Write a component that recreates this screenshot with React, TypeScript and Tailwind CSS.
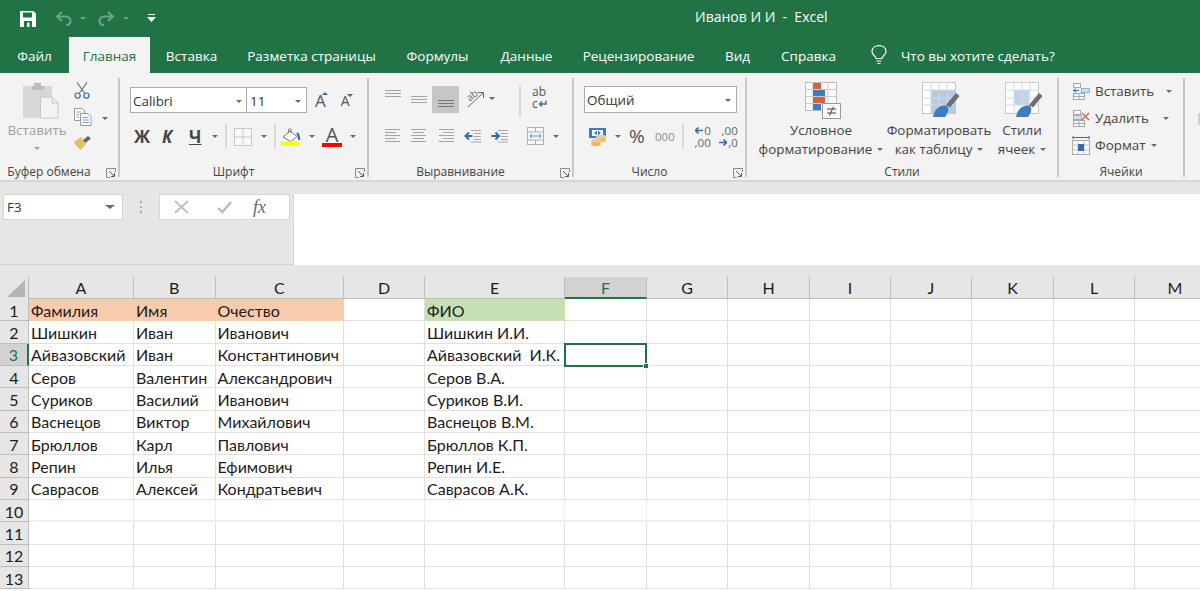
import React from "react";

const ui = "font-['Open_Sans','Noto_Sans',sans-serif]";

function Caret({ className = "" }: { className?: string }) {
  return <span className={`inline-block w-0 h-0 border-x-[3.5px] border-x-transparent border-t-[3.5px] border-t-[#6a6a6a] ${className}`}></span>;
}

function Launcher() {
  return (
    <svg width="10" height="10" viewBox="0 0 10 10" className="absolute right-[2px] top-[4px]" fill="none" stroke="#8a8a8a" strokeWidth="1">
      <path d="M9.5 4V0.5H0.5V9.5H4" />
      <path d="M3 3L8.5 8.5M5 8.5H8.5V5" stroke="#5b5b5b" />
    </svg>
  );
}

function Group({ w, label, launcher, children }: { w: string; label: string; launcher?: boolean; children: React.ReactNode }) {
  return (
    <div className={`${w} shrink-0 h-[99px] mt-[5px] flex flex-col border-r-[2px] border-[#c9c9c9]`}>
      <div className="h-[86px] flex flex-col">{children}</div>
      <div className={`relative h-[13px] flex items-start justify-center text-[12px] leading-[16px] text-[#444] ${launcher ? "pr-[20px]" : ""}`}>
        {label}
        {launcher && <Launcher />}
      </div>
    </div>
  );
}

function Lines({ rows, active }: { rows: [number, number][]; active?: boolean }) {
  return (
    <svg width="18" height={rows.length * 3 + 1} fill="none" stroke={active ? "#777" : "#a3a3a3"} strokeWidth="1">
      {rows.map(([a, b], i) => <path key={i} d={`M${a} ${i * 3 + 1.5}H${b}`} />)}
    </svg>
  );
}

const full: [number, number][] = [[1, 17], [1, 17], [1, 17]];
const leftRows: [number, number][] = [[1, 16], [1, 12], [1, 16], [1, 12], [1, 16]];
const centerRows: [number, number][] = [[1, 16], [3, 14], [1, 16], [3, 14], [1, 16]];
const rightRows: [number, number][] = [[2, 17], [6, 17], [2, 17], [6, 17], [2, 17]];

function IndentIcon({ flip }: { flip?: boolean }) {
  return (
    <svg width="18" height="14" viewBox="0 0 18 14" fill="none">
      <path d="M7 1.5H17M10 4.5H17M10 7.5H17M10 10.5H17M7 13H17" stroke="#a8a8a8" />
      {flip
        ? <path d="M0.5 7H7M4.5 3.5L8 7L4.5 10.5" stroke="#2f6fb0" strokeWidth="2" />
        : <path d="M8.5 7H2M5 3.5L1.5 7L5 10.5" stroke="#2f6fb0" strokeWidth="2" />}
    </svg>
  );
}

function SaveIcon() {
  return (
    <svg width="16" height="16" viewBox="0 0 16 16">
      <path d="M0 0H13.5L16 2.5V16H0Z" fill="#fff" />
      <path d="M3 1.5H12V6.5H3Z" fill="#217346" />
      <path d="M4 10H12V16H9.5V11.5H7V16H4Z" fill="#217346" />
    </svg>
  );
}

function UndoIcon({ flip }: { flip?: boolean }) {
  return (
    <svg width="17" height="15" viewBox="0 0 17 15" fill="none" stroke="#6ea58a" strokeWidth="2" className={flip ? "-scale-x-100" : ""}>
      <path d="M7 1L2 5.5L7 10" />
      <path d="M2.5 5.5H10.5C13.5 5.5 15.5 7.5 15.5 10C15.5 12.5 13.5 14 11 14" />
    </svg>
  );
}

function ScissorsIcon() {
  return (
    <svg width="16" height="17" viewBox="0 0 16 17" fill="none">
      <path d="M3 0.5L10.5 11M13 0.5L5.5 11" stroke="#6f6f6f" strokeWidth="1.2" />
      <circle cx="3.6" cy="13.6" r="2.6" stroke="#2f6fb0" strokeWidth="1.2" />
      <circle cx="12.4" cy="13.6" r="2.6" stroke="#2f6fb0" strokeWidth="1.2" />
    </svg>
  );
}

function CopyIcon() {
  return (
    <svg width="18" height="18" viewBox="0 0 18 18" fill="#fff" stroke="#9a9a9a">
      <path d="M0.5 0.5H8L10.5 3V12.5H0.5Z" />
      <path d="M6.5 5.5H14L17 8.5V17.5H6.5Z" />
      <path d="M2.5 4H7M2.5 6.5H5M2.5 9H5M8.5 9.5H14.5M8.5 12H15M8.5 14.5H15" stroke="#7d9fc2" />
    </svg>
  );
}

function BrushIcon() {
  return (
    <svg width="17" height="14" viewBox="0 0 17 14">
      <path d="M0 6L7 1L12 8L7 14C5 13 1 9 0 6Z" fill="#e8bd6a" />
      <path d="M9 4L14 0L17 2.5L11.5 7Z" fill="#666" />
    </svg>
  );
}

function PasteIcon() {
  return (
    <svg width="36" height="36" viewBox="0 0 36 36">
      <rect x="0" y="3" width="29" height="32" rx="1" fill="#d9d6d8" />
      <path d="M9 3H11V0H18V3H21V7H9Z" fill="#bdbdbd" />
      <path d="M17.5 14H29L35 20V35H17.5Z" fill="#f5f2f5" stroke="#c6c6c6" />
      <path d="M29 14V20H35" fill="none" stroke="#c6c6c6" />
    </svg>
  );
}

function BorderIcon() {
  return (
    <svg width="18" height="18" viewBox="0 0 18 18" fill="#fafafa" stroke="#c8c8c8">
      <rect x="0.5" y="0.5" width="17" height="17" />
      <path d="M9 0.5V17.5M0.5 9H17.5" />
    </svg>
  );
}

function FillIcon() {
  return (
    <svg width="20" height="18" viewBox="0 0 20 18">
      <path d="M9 3L16 8.5L9.5 13.5L2 9Z" fill="#fff" stroke="#777" />
      <path d="M7.5 5V1.5C7.5 0.5 10 0.5 10 1.5V5" fill="none" stroke="#777" />
      <path d="M16 5C18 7 18.5 9 18 12" fill="none" stroke="#2f6fb0" strokeWidth="2" />
      <path d="M0 13.5H19V18H0Z" fill="#ffff00" />
    </svg>
  );
}

function OrientIcon() {
  return (
    <svg width="20" height="20" viewBox="0 0 20 20" fill="none" stroke="#666" className="overflow-visible">
      <path d="M3 19L18 5M13 4.5H18.5V10" />
      <text x="2" y="12" fontSize="10" fill="#666" stroke="none" transform="rotate(-40 6 9)">ab</text>
    </svg>
  );
}

function WrapIcon() {
  return (
    <div className="w-[18px] h-[24px] text-[12px] leading-[12px] text-[#555]">
      <div>ab</div>
      <div className="flex items-center">c
        <svg width="9" height="8" viewBox="0 0 9 8" fill="none" stroke="#2f6fb0" strokeWidth="1.4"><path d="M8 0.5V4H1.5M4 1.5L1.5 4L4 6.5" /></svg>
      </div>
    </div>
  );
}

function MergeIcon() {
  return (
    <svg width="17" height="18" viewBox="0 0 17 18" fill="#fbfbfb" stroke="#b0b0b0">
      <rect x="0.5" y="0.5" width="16" height="17" />
      <path d="M0.5 5H16.5M0.5 13H16.5M8.5 0.5V5M8.5 13V17.5" />
      <path d="M3 9H14M5 7L3 9L5 11M12 7L14 9L12 11" stroke="#5a93cc" />
    </svg>
  );
}

function MoneyIcon() {
  return (
    <svg width="18" height="18" viewBox="0 0 18 18">
      <rect x="0" y="0" width="17" height="10" fill="#3a7cc0" />
      <rect x="3" y="2" width="11" height="6" fill="#fff" />
      <path d="M5 5L8 2.8V7.2ZM12 5L9 2.8V7.2Z" fill="#3a7cc0" />
      <ellipse cx="12" cy="9" rx="5" ry="2.2" fill="#f2cb8c" />
      <ellipse cx="12" cy="12" rx="5" ry="2.2" fill="#eebf72" />
      <ellipse cx="7" cy="13" rx="5" ry="2" fill="#f2cb8c" />
      <ellipse cx="7" cy="16" rx="5" ry="2" fill="#e9b564" />
    </svg>
  );
}

function DecimalIcon({ flip }: { flip?: boolean }) {
  const arrow = flip ? "M0 3.5H7M4.5 0.5L7.5 3.5L4.5 6.5" : "M8 3.5H1M3.5 0.5L0.5 3.5L3.5 6.5";
  const top = flip ? ",00" : "0";
  const bottom = flip ? ",0" : ",00";
  return (
    <div className="w-[19px] h-[24px] flex flex-col text-[11.5px] leading-[12px] text-[#666]">
      <div className="flex justify-end items-center gap-[1px]">
        {!flip && <svg width="8" height="7" fill="none" stroke="#2f6fb0" strokeWidth="1.6"><path d={arrow} /></svg>}
        {top}
      </div>
      <div className="flex justify-end items-center gap-[1px]">
        {flip && <svg width="8" height="7" fill="none" stroke="#2f6fb0" strokeWidth="1.6"><path d={arrow} /></svg>}
        {bottom}
      </div>
    </div>
  );
}

function CondIcon() {
  return (
    <svg width="36" height="37" viewBox="0 0 36 37">
      <rect x="0.5" y="0.5" width="31" height="28" fill="#fff" stroke="#bbb" />
      <path d="M0.5 7.5H31M0.5 14.5H31M0.5 21.5H31M8 0.5V28M23 0.5V28" stroke="#ccc" fill="none" />
      <rect x="8" y="1" width="8" height="6" fill="#d9603c" />
      <rect x="8" y="8" width="12" height="6" fill="#3e7dbd" />
      <rect x="8" y="15" width="12" height="6" fill="#d9603c" />
      <rect x="8" y="22" width="8" height="6" fill="#3e7dbd" />
      <rect x="17.5" y="21.5" width="18" height="15" fill="#fbfbfb" stroke="#999" />
      <path d="M22 27H31M22 31H31M28.5 24.5L24.5 33.5" stroke="#444" fill="none" />
    </svg>
  );
}

function TableStyleIcon({ mode }: { mode: "table" | "cell" }) {
  return (
    <svg width="38" height="36" viewBox="0 0 38 36">
      <rect x="0.5" y="0.5" width="33" height="31" fill="#fff" stroke="#c8c8c8" />
      {mode === "table"
        ? <rect x="9" y="8" width="24" height="23" fill="#b6cbe2" />
        : <rect x="9" y="8" width="15" height="15" fill="#bfd3e8" />}
      <path d="M0.5 8H33M0.5 16H33M0.5 23H33M9 0.5V31M17 0.5V31M25 0.5V31" stroke="#d2d8df" fill="none" />
      <path d="M24 23L34 11L37.5 14L28 25.5Z" fill="#6e6e6e" />
      <path d="M11 35C12 28 18 22 25 24C27.5 27 26 31 23 35Z" fill="#3e7dbd" />
    </svg>
  );
}

function CellInsertIcon() {
  return (
    <svg width="18" height="17" viewBox="0 0 18 17" fill="#fafafa" stroke="#a8a8a8">
      <rect x="1.5" y="0.5" width="7" height="4" />
      <rect x="1.5" y="10.5" width="11" height="6" />
      <path d="M7 10.5V16.5M1.5 13.5H12.5" />
      <rect x="9.5" y="5.5" width="8" height="4" fill="#cfe0f0" stroke="#8fb2d4" />
      <path d="M1 7.5H7M4 5.5L1.5 7.5L4 9.5" stroke="#2f6fb0" fill="none" />
    </svg>
  );
}

function CellDeleteIcon() {
  return (
    <svg width="18" height="17" viewBox="0 0 18 17" fill="#fafafa" stroke="#a8a8a8">
      <rect x="1.5" y="0.5" width="7" height="4" />
      <rect x="1.5" y="10.5" width="11" height="6" />
      <path d="M7 10.5V16.5M1.5 13.5H12.5" />
      <rect x="1.5" y="5.5" width="8" height="4" fill="#cfe0f0" stroke="#8fb2d4" />
      <path d="M10 3L17 10M17 3L10 10" stroke="#d9603c" strokeWidth="1.4" fill="none" />
    </svg>
  );
}

function CellFormatIcon() {
  return (
    <svg width="18" height="19" viewBox="0 0 18 19" fill="#fafafa" stroke="#a8a8a8">
      <rect x="0.5" y="4.5" width="17" height="14" />
      <path d="M0.5 9H17.5M0.5 14H17.5M6 4.5V18.5M12 4.5V18.5" stroke="#c8c8c8" />
      <rect x="6" y="8" width="6" height="7" fill="#2f6fb0" stroke="none" />
      <path d="M1 1.5H17M1 0V3M17 0V3" stroke="#2f6fb0" fill="none" />
    </svg>
  );
}

function BulbIcon() {
  return (
    <svg width="16" height="20" viewBox="0 0 16 20" fill="none" stroke="#fff" strokeWidth="1.2">
      <path d="M5 13.5C5 11 1 10 1 6.5C1 3 4 0.7 8 0.7C12 0.7 15 3 15 6.5C15 10 11 11 11 13.5Z" />
      <path d="M5.5 16H10.5M6.5 18.5H9.5" />
    </svg>
  );
}

function FoldIcon() {
  return (
    <svg width="9" height="9" viewBox="0 0 9 9" fill="#fff"><path d="M1 0H8V1H1ZM0 3H9L4.5 8Z" /></svg>
  );
}

function QuickAccess() {
  return (
    <div className="h-[37px] relative flex items-center text-white pl-[20px]">
      <SaveIcon />
      <span className="ml-[19px]"><UndoIcon /></span>
      <Caret className="ml-[8px] border-t-[#6ea58a]" />
      <span className="ml-[12px]"><UndoIcon flip /></span>
      <Caret className="ml-[8px] border-t-[#6ea58a]" />
      <span className="ml-[18px]"><FoldIcon /></span>
      <div className="absolute left-[695px] top-[8px] text-[14px] leading-[18px] whitespace-pre">Иванов И И  -  Excel</div>
    </div>
  );
}

const tabs = [
  { name: "Файл", w: "w-[63px] ml-[3px] mr-[3px]" },
  { name: "Главная", w: "w-[81px]", active: true },
  { name: "Вставка", w: "w-[83px]" },
  { name: "Разметка страницы", w: "w-[157px]" },
  { name: "Формулы", w: "w-[95px]" },
  { name: "Данные", w: "w-[83px]" },
  { name: "Рецензирование", w: "w-[141px]" },
  { name: "Вид", w: "w-[57px]" },
  { name: "Справка", w: "w-[85px]" },
];

function Tabs() {
  return (
    <div className="h-[36px] flex items-stretch text-white text-[13.5px]">
      {tabs.map((t) => (
        <div key={t.name} className={`${t.w} flex items-center justify-center pt-[2px] whitespace-nowrap ${t.active ? "bg-[#f3f3f3] text-[#217346]" : ""}`}>{t.name}</div>
      ))}
      <div className="ml-[20px] flex items-center"><BulbIcon /></div>
      <div className="ml-[14px] flex items-center pt-[2px]">Что вы хотите сделать?</div>
    </div>
  );
}

function Clipboard() {
  return (
    <Group w="w-[120px]" label="Буфер обмена" launcher>
      <div className="flex text-[#a0a0a0]">
        <div className="w-[74px] flex flex-col items-center">
          <div className="mt-[5px] ml-[7px]"><PasteIcon /></div>
          <div className="mt-[2px] text-[13.4px] leading-[18px]">Вставить</div>
          <Caret className="mt-[8px] border-t-[#a0a0a0]" />
        </div>
        <div className="flex flex-col">
          <div className="mt-[4px]"><ScissorsIcon /></div>
          <div className="mt-[9px] flex items-center"><CopyIcon /><Caret className="ml-[10px] mt-[2px]" /></div>
          <div className="mt-[10px]"><BrushIcon /></div>
        </div>
      </div>
    </Group>
  );
}

function Font() {
  return (
    <Group w="w-[249px]" label="Шрифт" launcher>
      <div className="flex items-center mt-[9px] ml-[10px] h-[26px]">
        <div className="w-[117px] h-[26px] bg-white border border-[#ababab] flex items-center justify-between pl-[2px] pr-[4px] pt-[2px] text-[13.4px] text-[#333]">Calibri<Caret /></div>
        <div className="w-[60px] h-[26px] bg-white border-y border-r border-[#ababab] flex items-center justify-between pl-[3px] pr-[5px] pt-[2px] text-[13.4px] text-[#333]">11<Caret /></div>
        <div className="ml-[8px] flex text-[17px] leading-none text-[#555]">A<span className="w-0 h-0 -ml-[4px] border-x-[3px] border-x-transparent border-b-[3px] border-b-[#2f6fb0]"></span></div>
        <div className="ml-[13px] flex text-[14px] leading-none text-[#555] pt-[1px]">A<span className="w-0 h-0 -ml-[3px] border-x-[3px] border-x-transparent border-t-[3px] border-t-[#2f6fb0]"></span></div>
      </div>
      <div className="flex items-center mt-[10px] h-[27px] text-[#444] font-bold text-[17px]">
        <span className="ml-[14px] w-[17px]">Ж</span>
        <span className="ml-[11px] w-[15px] italic">К</span>
        <span className="ml-[12px] w-[13px] underline">Ч</span>
        <Caret className="ml-[10px]" />
        <span className="ml-[7px] w-[2px] h-[25px] bg-[#d9d9d9]"></span>
        <span className="ml-[7px]"><BorderIcon /></span>
        <Caret className="ml-[9px]" />
        <span className="ml-[7px] w-[2px] h-[25px] bg-[#d9d9d9]"></span>
        <span className="ml-[5px]"><FillIcon /></span>
        <Caret className="ml-[8px]" />
        <span className="ml-[7px] w-[20px] flex flex-col items-center font-normal text-[20px] leading-[16px] text-[#555]">A<span className="w-[20px] h-[4px] bg-[#ff0000]"></span></span>
        <Caret className="ml-[8px]" />
      </div>
    </Group>
  );
}

function Alignment() {
  return (
    <Group w="w-[205px]" label="Выравнивание" launcher>
      <div className="flex mt-[8px] h-[27px] ml-[15px]">
        <div className="w-[26px] pt-[3px]"><Lines rows={full} /></div>
        <div className="w-[22px] pt-[9px]"><Lines rows={full} /></div>
        <div className="w-[27px] h-[27px] bg-[#c6c6c6] flex items-end justify-center pb-[4px]"><Lines rows={full} active /></div>
        <div className="ml-[6px] pt-[2px]"><OrientIcon /></div>
        <Caret className="ml-[4px] mt-[11px]" />
        <div className="ml-[24px] w-[2px] h-[30px] bg-[#d9d9d9]"></div>
        <div className="ml-[11px]"><WrapIcon /></div>
      </div>
      <div className="flex items-center mt-[13px] h-[20px] ml-[15px]">
        <div className="w-[26px]"><Lines rows={leftRows} /></div>
        <div className="w-[27px]"><Lines rows={centerRows} /></div>
        <div className="w-[27px]"><Lines rows={rightRows} /></div>
        <div className="w-[27px]"><IndentIcon /></div>
        <div className="w-[36px]"><IndentIcon flip /></div>
        <MergeIcon />
        <Caret className="ml-[9px]" />
      </div>
    </Group>
  );
}

function NumberGroup() {
  return (
    <Group w="w-[173px]" label="Число" launcher>
      <div className="mt-[8px] ml-[10px] w-[153px] h-[27px] bg-white border border-[#ababab] flex items-center justify-between pl-[2px] pr-[5px] pt-[2px] text-[13.4px] text-[#333]">Общий<Caret /></div>
      <div className="flex items-center mt-[10px] h-[27px] ml-[15px] text-[#555]">
        <MoneyIcon />
        <Caret className="ml-[8px]" />
        <span className="ml-[8px] w-[18px] text-[19px] leading-none">%</span>
        <span className="ml-[8px] text-[11.5px] text-[#8a8a8a]">000</span>
        <span className="ml-[7px] w-[2px] h-[25px] bg-[#d9d9d9]"></span>
        <span className="ml-[8px]"><DecimalIcon /></span>
        <span className="ml-[8px]"><DecimalIcon flip /></span>
      </div>
    </Group>
  );
}

function BigButton({ w, icon, one, two }: { w: string; icon: React.ReactNode; one: string; two: string }) {
  return (
    <div className={`${w} flex flex-col items-center text-[13.4px] leading-[19px] text-[#444]`}>
      <div className="h-[36px] mt-[4px] ml-[4px]">{icon}</div>
      <div className="mt-[3px]">{one}</div>
      <div className="whitespace-nowrap flex items-center">{two}<Caret className="ml-[5px]" /></div>
    </div>
  );
}

function Styles() {
  return (
    <Group w="w-[312px]" label="Стили">
      <div className="flex ml-[10px]">
        <BigButton w="w-[128px]" icon={<CondIcon />} one="Условное" two="форматирование" />
        <BigButton w="w-[108px]" icon={<TableStyleIcon mode="table" />} one="Форматировать" two="как таблицу" />
        <BigButton w="w-[58px]" icon={<TableStyleIcon mode="cell" />} one="Стили" two="ячеек" />
      </div>
    </Group>
  );
}

function CellRow({ icon, label, caret }: { icon: React.ReactNode; label: string; caret: string }) {
  return (
    <div className="h-[27px] flex items-center text-[13.4px] text-[#444] pl-[13px]">
      <div className="w-[23px]">{icon}</div>
      {label}
      <Caret className={caret} />
    </div>
  );
}

function Cells() {
  return (
    <Group w="w-[126px]" label="Ячейки">
      <div>
        <CellRow icon={<CellInsertIcon />} label="Вставить" caret="ml-[12px]" />
        <CellRow icon={<CellDeleteIcon />} label="Удалить" caret="ml-[14px]" />
        <CellRow icon={<CellFormatIcon />} label="Формат" caret="ml-[6px]" />
      </div>
    </Group>
  );
}

function Ribbon() {
  return (
    <div className="h-[109px] bg-[#f3f3f3] border-b-[2px] border-[#d6d6d6] flex overflow-hidden">
      <Clipboard />
      <Font />
      <Alignment />
      <NumberGroup />
      <Styles />
      <Cells />
      <div className="ml-[13px] mt-[40px] w-[2px] h-[12px] bg-[#cfcfcf]"></div>
    </div>
  );
}

function FormulaBar() {
  return (
    <div className="h-[83px] bg-[#e6e6e6] pt-[12px] flex items-start border-b border-[#d0d0d0]">
      <div className="ml-[3px] w-[120px] h-[26px] bg-white border border-[#d6d6d6] flex items-center justify-between pl-[3px] pr-[7px] text-[13.4px] text-[#333]">F3<Caret className="border-x-[5px] border-t-[4px]" /></div>
      <div className="w-[36px] h-[26px] flex flex-col items-center justify-center gap-[3px]">
        <span className="w-[2px] h-[2px] bg-[#a8a8a8]"></span>
        <span className="w-[2px] h-[2px] bg-[#a8a8a8]"></span>
        <span className="w-[2px] h-[2px] bg-[#a8a8a8]"></span>
      </div>
      <div className="w-[131px] h-[26px] bg-white border border-[#d6d6d6] flex items-center pl-[14px]">
        <svg width="15" height="14" viewBox="0 0 15 14" fill="none" stroke="#bdbdbd" strokeWidth="1.8"><path d="M1 1L14 13M14 1L1 13" /></svg>
        <svg className="ml-[28px]" width="15" height="13" viewBox="0 0 15 13" fill="none" stroke="#bdbdbd" strokeWidth="2.6"><path d="M1 7L5.5 11L14 1" /></svg>
        <span className="ml-[21px] font-['Liberation_Serif',serif] italic text-[18px] leading-none text-[#666]">fx</span>
      </div>
      <div className="ml-[3px] flex-1 h-[71px] bg-white border-l border-[#d6d6d6]"></div>
    </div>
  );
}

const cols = ["A", "B", "C", "D", "E", "F", "G", "H", "I", "J", "K", "L", "M"];

const people = [
  ["Шишкин", "Иван", "Иванович", "Шишкин И.И."],
  ["Айвазовский", "Иван", "Константинович", "Айвазовский  И.К."],
  ["Серов", "Валентин", "Александрович", "Серов В.А."],
  ["Суриков", "Василий", "Иванович", "Суриков В.И."],
  ["Васнецов", "Виктор", "Михайлович", "Васнецов В.М."],
  ["Брюллов", "Карл", "Павлович", "Брюллов К.П."],
  ["Репин", "Илья", "Ефимович", "Репин И.Е."],
  ["Саврасов", "Алексей", "Кондратьевич", "Саврасов А.К."],
];

function cellText(r: number, c: number) {
  if (r === 1) {
    return ["Фамилия", "Имя", "Очество", "", "ФИО"][c] || "";
  }
  const p = people[r - 2];
  if (!p) return "";
  return ["" + p[0], p[1], p[2], "", p[3]][c] || "";
}

function Sheet() {
  const rows = Array.from({ length: 13 }, (_, i) => i + 1);
  return (
    <div className="grid grid-cols-[29px_105px_81.5px_128.5px_81px_140px_82px_81px_82px_81px_81px_82px_81px_81px] grid-rows-[22px] auto-rows-[22.34px] font-['Lato','Open_Sans',sans-serif] text-[16px] text-[#1c1c1c]">
      <div className="bg-[#e6e6e6] border-r border-[#b8b8b8] flex items-end justify-end pr-[3px] pb-[2px]">
        <span className="w-0 h-0 border-l-[18px] border-l-transparent border-b-[17px] border-b-[#b5b5b5]"></span>
      </div>
      {cols.map((c) => (
        <div key={c} className={`flex items-center justify-center pt-[1px] border-r border-[#bdbdbd] ${c === "F" ? "bg-[#d2d2d2] text-[#217346] border-b-2 border-b-[#217346]" : "bg-[#e6e6e6] border-b border-b-[#bdbdbd]"}`}>{c}</div>
      ))}
      {rows.map((r) => (
        <React.Fragment key={r}>
          <div className={`flex items-center justify-center pt-[2px] border-b border-[#bdbdbd] ${r === 3 ? "bg-[#d2d2d2] text-[#217346] border-r-2 border-r-[#217346]" : "bg-[#e6e6e6] border-r border-r-[#bdbdbd]"}`}>{r}</div>
          {cols.map((_, c) => {
            const orange = r === 1 && c < 3;
            const green = r === 1 && c === 4;
            const selected = r === 3 && c === 5;
            return (
              <div
                key={c}
                className={`relative flex items-center whitespace-pre pt-[2px] pl-[2px] ${r === 10 ? "border-b-2" : "border-b"} ${orange ? "bg-[#f8cbad] border-[#f8cbad]" : green ? "bg-[#c6e0b4] border-[#c6e0b4]" : r === 10 ? "bg-white border-[#efefef] border-r" : "bg-white border-[#e0e0e0] border-r"}`}
              >
                {cellText(r, c)}
                {selected && (
                  <div className="absolute z-10 -left-[1px] -top-[1px] -right-[1px] -bottom-[2px] border-2 border-[#217346]">
                    <span className="absolute -right-[4px] -bottom-[4px] w-[6px] h-[6px] bg-[#217346] border border-white"></span>
                  </div>
                )}
              </div>
            );
          })}
        </React.Fragment>
      ))}
    </div>
  );
}

export default function App() {
  return (
    <div className={`w-[1200px] h-[591px] overflow-hidden bg-white ${ui}`}>
      <div className="bg-[#217346]">
        <QuickAccess />
        <Tabs />
      </div>
      <Ribbon />
      <FormulaBar />
      <div className="h-[12px] bg-[#e6e6e6]"></div>
      <Sheet />
    </div>
  );
}
